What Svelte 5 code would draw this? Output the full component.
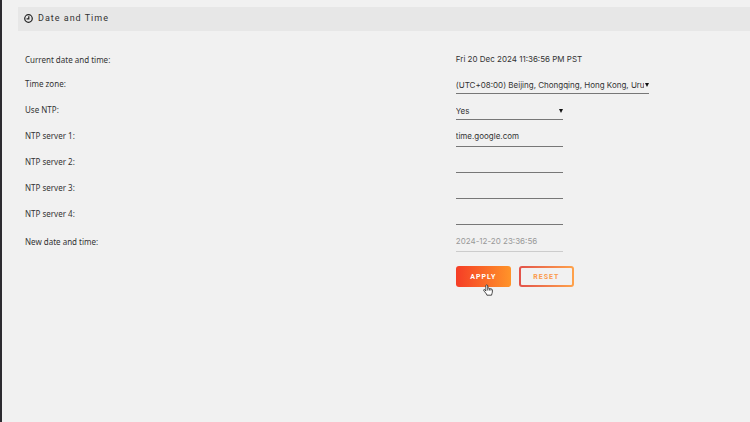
<script lang="ts">
  type Server = {
    id: string;
    label: string;
    value: string;
  };

  let timeZone = '(UTC+08:00) Beijing, Chongqing, Hong Kong, Urumqi';
  let useNtp = 'Yes';
  let newDate = '2024-12-20 23:36:56';

  let servers: Server[] = [
    { id: 'ntp1', label: 'NTP server 1:', value: 'time.google.com' },
    { id: 'ntp2', label: 'NTP server 2:', value: '' },
    { id: 'ntp3', label: 'NTP server 3:', value: '' },
    { id: 'ntp4', label: 'NTP server 4:', value: '' },
  ];
</script>

<div class="page">
  <h1 class="title">
    <svg class="clock" viewBox="0 0 16 16" aria-hidden="true">
      <circle cx="8" cy="8" r="6.7" />
      <path d="M8.5 4v4.5H4.5" />
    </svg>
    Date and Time
  </h1>

  <form class="form" on:submit|preventDefault>
    <div class="row current">
      <span>Current date and time:</span>
      <span class="value">Fri 20 Dec 2024 11:36:56 PM PST</span>
    </div>
    <div class="row">
      <label for="zone">Time zone:</label>
      <div class="select wide">
        <select id="zone" bind:value={timeZone}>
          <option>(UTC+08:00) Beijing, Chongqing, Hong Kong, Urumqi</option>
        </select>
      </div>
    </div>
    <div class="row">
      <label for="use-ntp">Use NTP:</label>
      <div class="select">
        <select id="use-ntp" bind:value={useNtp}>
          <option>Yes</option>
          <option>No</option>
        </select>
      </div>
    </div>
    <div class="servers">
      {#each servers as server}
        <div class="row">
          <label for={server.id}>{server.label}</label>
          <input id={server.id} type="text" bind:value={server.value} />
        </div>
      {/each}
    </div>
    <div class="row">
      <label for="new-date">New date and time:</label>
      <input id="new-date" type="text" value={newDate} disabled />
    </div>
    <div class="row buttons">
      <div class="actions">
        <button class="apply" type="submit">APPLY</button>
        <button class="reset" type="reset">RESET</button>
        <svg class="pointer" viewBox="0 0 18 22" aria-hidden="true">
          <path
            d="M5 13V3.5C5 .8 8.5.8 8.5 3.5V8c.5-1.2 3-1 3 .8.7-1.2 2.8-.8 2.8 1 .9-1 2.7-.4 2.7 1.2V15c0 2-1.5 3-1.5 5.5H7C6.5 17.5 3 15 1.2 12 .3 10.3 2.5 9.3 3.7 11z"
          />
          <path d="M8.5 8v4M11.5 9v3M14.3 10v2" />
        </svg>
      </div>
    </div>
  </form>
</div>

<style>
  :global(body) {
    background-color: #f1f1f1;
  }

  .page {
    box-sizing: border-box;
    min-height: 100vh;
    padding: 7px 0 0 16px;
    border-left: 2px solid #2c2b30;
    color: #333;
    font-family: "Noto Sans", "Open Sans", sans-serif;
    font-size: 8px;
  }

  .title {
    box-sizing: border-box;
    display: flex;
    align-items: center;
    gap: 5px;
    height: 24px;
    margin: 0;
    padding: 0 6px 2px;
    background-color: #e7e7e7;
    font-family: Roboto, sans-serif;
    font-size: 9px;
    font-weight: 400;
    letter-spacing: 1px;
  }

  .clock {
    width: 9px;
    height: 9px;
    fill: none;
    stroke: #222;
    stroke-width: 2.2;
  }

  .form {
    padding: 17px 7px 0;
  }

  .row {
    display: grid;
    grid-template-columns: 3fr 2fr;
    height: 26px;
    line-height: 17px;
  }

  .current {
    align-items: end;
    height: 20px;
  }

  .row label {
    padding-top: 7px;
  }

  .servers {
    padding: 1px 0;
  }

  .servers label {
    padding-top: 6px;
  }

  .value,
  input,
  select {
    font-family: Inter, "Noto Sans", sans-serif;
    font-size: 8px;
  }

  input,
  select {
    box-sizing: border-box;
    width: 107px;
    height: 26px;
    margin: 0;
    padding: 5px 0 0;
    border: 0;
    border-bottom: 1px solid #777;
    border-radius: 0;
    outline: none;
    background: transparent;
    color: #333;
  }

  input:disabled {
    border-color: #ccc;
    color: #999;
  }

  .select {
    position: relative;
    width: 107px;
  }

  .wide {
    width: 193px;
  }

  select {
    width: 100%;
    padding: 8px 5px 0 0;
    appearance: none;
  }

  .select::after {
    content: "";
    position: absolute;
    right: 0;
    top: 15px;
    border: 2px solid transparent;
    border-top: 4px solid #111;
    border-bottom: 0;
    pointer-events: none;
  }

  .buttons {
    height: auto;
    padding-top: 14px;
  }

  .actions {
    position: relative;
    display: flex;
    grid-column: 2;
    gap: 8px;
  }

  button {
    width: 55px;
    height: 21px;
    padding: 0;
    border: 2px solid transparent;
    border-radius: 3px;
    font-family: Roboto, sans-serif;
    font-size: 7px;
    font-weight: 700;
    letter-spacing: 1px;
  }

  .apply {
    background: linear-gradient(90deg, #f53d26, #ff9429) border-box;
    color: #fff;
  }

  .reset {
    background:
      linear-gradient(#f1f1f1, #f1f1f1) padding-box,
      linear-gradient(90deg, #e2524a, #ffa24a) border-box;
    color: #fb9a4b;
  }

  .pointer {
    position: absolute;
    left: 27px;
    top: 18px;
    width: 10px;
    height: 12px;
    fill: #fff;
    stroke: #222;
    stroke-width: 1.5;
  }
</style>
